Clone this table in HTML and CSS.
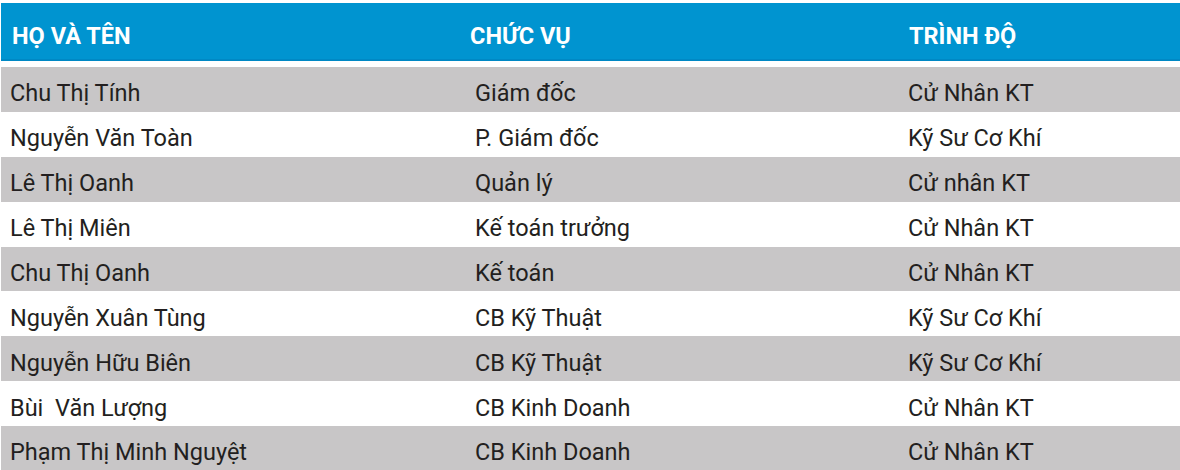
FILE: index.html
```html
<!DOCTYPE html>
<html lang="vi">
<head>
<meta charset="utf-8">
<link rel="stylesheet" href="styles.css">
</head>
<body>
<div class="staff">
  <div class="head">
    <div class="h h1">HỌ VÀ TÊN</div>
    <div class="h h2">CHỨC VỤ</div>
    <div class="h h3">TRÌNH ĐỘ</div>
  </div>
  <div class="row odd"><div class="c c1">Chu Thị Tính</div><div class="c c2">Giám đốc</div><div class="c c3">Cử Nhân KT</div></div>
  <div class="row"><div class="c c1">Nguyễn Văn Toàn</div><div class="c c2">P. Giám đốc</div><div class="c c3">Kỹ Sư Cơ Khí</div></div>
  <div class="row odd"><div class="c c1">Lê Thị Oanh</div><div class="c c2">Quản lý</div><div class="c c3">Cử nhân KT</div></div>
  <div class="row"><div class="c c1">Lê Thị Miên</div><div class="c c2">Kế toán trưởng</div><div class="c c3">Cử Nhân KT</div></div>
  <div class="row odd"><div class="c c1">Chu Thị Oanh</div><div class="c c2">Kế toán</div><div class="c c3">Cử Nhân KT</div></div>
  <div class="row"><div class="c c1">Nguyễn Xuân Tùng</div><div class="c c2">CB Kỹ Thuật</div><div class="c c3">Kỹ Sư Cơ Khí</div></div>
  <div class="row odd"><div class="c c1">Nguyễn Hữu Biên</div><div class="c c2">CB Kỹ Thuật</div><div class="c c3">Kỹ Sư Cơ Khí</div></div>
  <div class="row"><div class="c c1">Bùi&nbsp; Văn Lượng</div><div class="c c2">CB Kinh Doanh</div><div class="c c3">Cử Nhân KT</div></div>
  <div class="row odd"><div class="c c1">Phạm Thị Minh Nguyệt</div><div class="c c2">CB Kinh Doanh</div><div class="c c3">Cử Nhân KT</div></div>
</div>
</body>
</html>
```
FILE: styles.css
```css
html, body {
  margin: 0;
  padding: 0;
  background: #ffffff;
}
body {
  font-family: Roboto, "Liberation Sans", Arial, sans-serif;
  color: #231f20;
  overflow: hidden;
}
.staff {
  padding: 3px 0 0 1px;
}
.head,
.row {
  display: grid;
  grid-template-columns: 462px 434px 1fr;
}
.head {
  height: 58px;
  background: #0094d0;
  border-bottom: 2px solid #0088c4;
  box-sizing: border-box;
  margin-bottom: 6px;
  align-items: center;
}
.h {
  color: #ffffff;
  font-weight: 700;
  font-size: 23.5px;
  padding-top: 9px;
  line-height: 24px;
}
.h1 { padding-left: 11px; }
.h2 { padding-left: 7px; }
.h3 { padding-left: 12px; }
.row {
  height: 44.875px;
  align-items: center;
}
.row.odd {
  background: #c8c6c7;
}
.c {
  font-size: 23.5px;
  line-height: 24px;
  padding-top: 8px;
}
.c1 { padding-left: 9px; }
.c2 { padding-left: 12px; }
.c3 { padding-left: 11px; }
```
